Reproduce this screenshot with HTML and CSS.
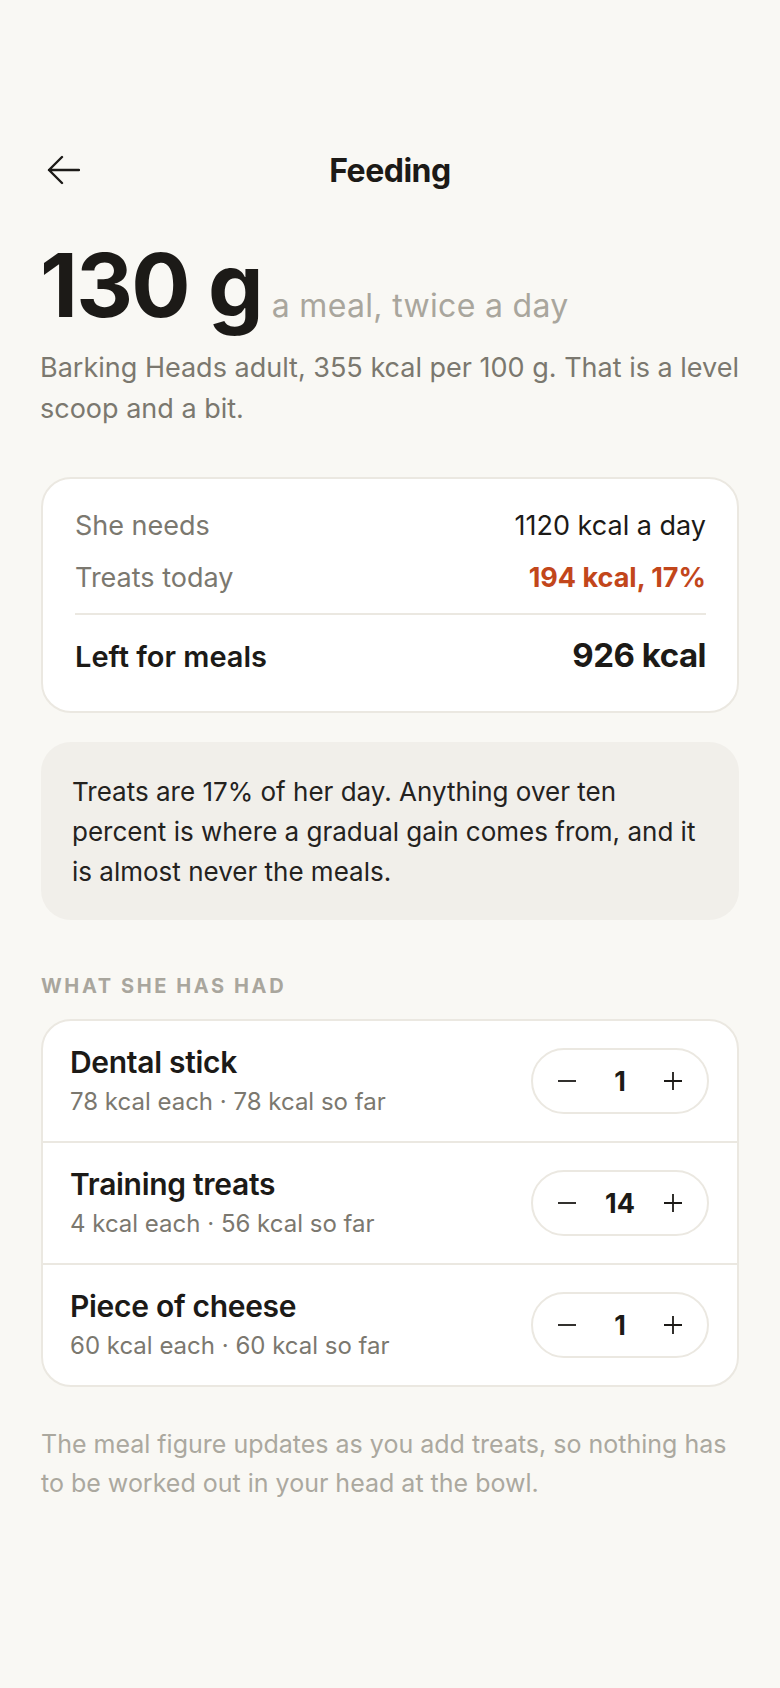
FILE: index.html
```html
<!DOCTYPE html>
<html lang="en">
<head>
    <meta charset="UTF-8">
    <title>Feeding</title>
    <link rel="stylesheet" href="styles.css">
</head>
<body>

<div class="page">

  <!--top bar-->
    <div class="top">
        <a class="back" href="#">
            <svg width="40" height="40" viewBox="0 0 40 40" fill="none" stroke="#1c1a17" stroke-width="2.4" stroke-linecap="round" stroke-linejoin="round">
                <path d="M9 20H39M22 7L9 20L22 33"/>
            </svg>
        </a>
        <h1>Feeding</h1>
        <span></span>
    </div>

  <!--meal amount-->
    <div class="hero">
        <span class="big">130 g</span>
        <span class="per">a meal, twice a day</span>
    </div>
    <p class="desc">Barking Heads adult, 355 kcal per 100 g. That is a level scoop and a bit.</p>

  <!--daily sums-->
    <div class="sum">
        <div class="sum-row">
            <span class="lbl">She needs</span>
            <span class="val">1120 kcal a day</span>
        </div>
        <div class="sum-row">
            <span class="lbl">Treats today</span>
            <span class="val warn">194 kcal, 17%</span>
        </div>
        <div class="sum-row total">
            <span class="lbl">Left for meals</span>
            <span class="val">926 kcal</span>
        </div>
    </div>

    <div class="note">
        Treats are 17% of her day. Anything over ten percent is where a gradual gain comes from, and it is almost never the meals.
    </div>

    <h2>What she has had</h2>

    <ul class="treats">
        <li>
            <div class="info">
                <div class="name">Dental stick</div>
                <div class="sub">78 kcal each · 78 kcal so far</div>
            </div>
            <div class="step">
                <button class="minus"><svg width="20" height="20" viewBox="0 0 20 20"><path d="M1 10H19"/></svg></button>
                <span class="num">1</span>
                <button class="plus"><svg width="20" height="20" viewBox="0 0 20 20"><path d="M1 10H19M10 1V19"/></svg></button>
            </div>
        </li>
        <li>
            <div class="info">
                <div class="name">Training treats</div>
                <div class="sub">4 kcal each · 56 kcal so far</div>
            </div>
            <div class="step">
                <button class="minus"><svg width="20" height="20" viewBox="0 0 20 20"><path d="M1 10H19"/></svg></button>
                <span class="num">14</span>
                <button class="plus"><svg width="20" height="20" viewBox="0 0 20 20"><path d="M1 10H19M10 1V19"/></svg></button>
            </div>
        </li>
        <li>
            <div class="info">
                <div class="name">Piece of cheese</div>
                <div class="sub">60 kcal each · 60 kcal so far</div>
            </div>
            <div class="step">
                <button class="minus"><svg width="20" height="20" viewBox="0 0 20 20"><path d="M1 10H19"/></svg></button>
                <span class="num">1</span>
                <button class="plus"><svg width="20" height="20" viewBox="0 0 20 20"><path d="M1 10H19M10 1V19"/></svg></button>
            </div>
        </li>
    </ul>

    <p class="foot">The meal figure updates as you add treats, so nothing has to be worked out in your head at the bowl.</p>

</div>

</body>
</html>
```

FILE: styles.css
```css
* {
margin: 0;
padding: 0;
list-style: none;
box-sizing: border-box;
}

body {
background-color: #f9f8f4;
font-family: Inter, "Liberation Sans", sans-serif;
color: #1c1a17;
}

.page {
width: 780px;
padding: 150px 40px 100px;
}

/*top bar*/
.top {
display: grid;
grid-template-columns: 1fr auto 1fr;
align-items: center;
height: 40px;
}

.back {
display: block;
width: 40px;
height: 40px;
}

.back svg {
display: block;
}

.top h1 {
font-size: 32px;
font-weight: 700;
letter-spacing: -0.015em;
}

/*meal amount*/
.hero {
display: flex;
align-items: baseline;
gap: 10px;
margin-top: 51px;
}

.big {
font-size: 88px;
line-height: 88px;
font-weight: 700;
letter-spacing: -0.02em;
}

.per {
font-size: 32px;
line-height: 38px;
color: #a9a69d;
letter-spacing: 0.01em;
}

.desc {
margin-top: 18px;
font-size: 27px;
line-height: 41px;
color: #7b786f;
}

/*daily sums*/
.sum {
margin-top: 48px;
margin-left: 1px;
margin-right: 1px;
background-color: #fff;
border: 2px solid #ebe8e1;
border-radius: 30px;
padding: 29px 31px 36px 32px;
}

.sum-row {
display: flex;
justify-content: space-between;
align-items: baseline;
line-height: 36px;
font-size: 27px;
}

.sum-row + .sum-row {
margin-top: 16px;
}

.lbl {
color: #7b786f;
}

.val {
color: #1c1a17;
}

.warn {
color: #c2461b;
font-weight: 700;
}

.sum-row.total {
border-top: 2px solid #ebe8e1;
margin-top: 17px;
padding-top: 22px;
}

.total .lbl {
color: #1c1a17;
font-size: 29px;
font-weight: 600;
}

.total .val {
font-size: 33px;
font-weight: 700;
letter-spacing: -0.015em;
}

/*callout*/
.note {
margin: 29px 1px 0;
background-color: #f1efea;
border-radius: 30px;
padding: 30px 31px 28px;
font-size: 26px;
line-height: 40px;
color: #24221e;
}

.page h2 {
margin-top: 54px;
padding-left: 1px;
font-size: 20px;
line-height: 24px;
font-weight: 700;
text-transform: uppercase;
letter-spacing: 0.13em;
color: #a9a69d;
}

/*treat list*/
.treats {
margin: 21px 1px 0;
background-color: #fff;
border: 2px solid #ebe8e1;
border-radius: 30px;
}

.treats li {
display: flex;
justify-content: space-between;
align-items: center;
padding: 23px 28px 23px 27px;
}

.treats li + li {
border-top: 2px solid #ebe8e1;
}

.name {
font-size: 30px;
line-height: 36px;
font-weight: 600;
letter-spacing: -0.01em;
}

.sub {
margin-top: 6px;
font-size: 24px;
line-height: 32px;
color: #7b786f;
}

.step {
display: flex;
align-items: center;
width: 178px;
height: 66px;
padding: 0 11px;
border: 2px solid #ebe8e1;
border-radius: 33px;
}

.step button {
width: 46px;
height: 46px;
border: none;
background: none;
display: flex;
align-items: center;
justify-content: center;
}

.step svg path {
stroke: #1c1a17;
stroke-width: 1.8;
fill: none;
}

.num {
width: 62px;
text-align: center;
font-size: 27px;
font-weight: 700;
}

.foot {
margin-top: 38px;
padding-left: 1px;
font-size: 25px;
line-height: 39px;
color: #aba89f;
}
```
